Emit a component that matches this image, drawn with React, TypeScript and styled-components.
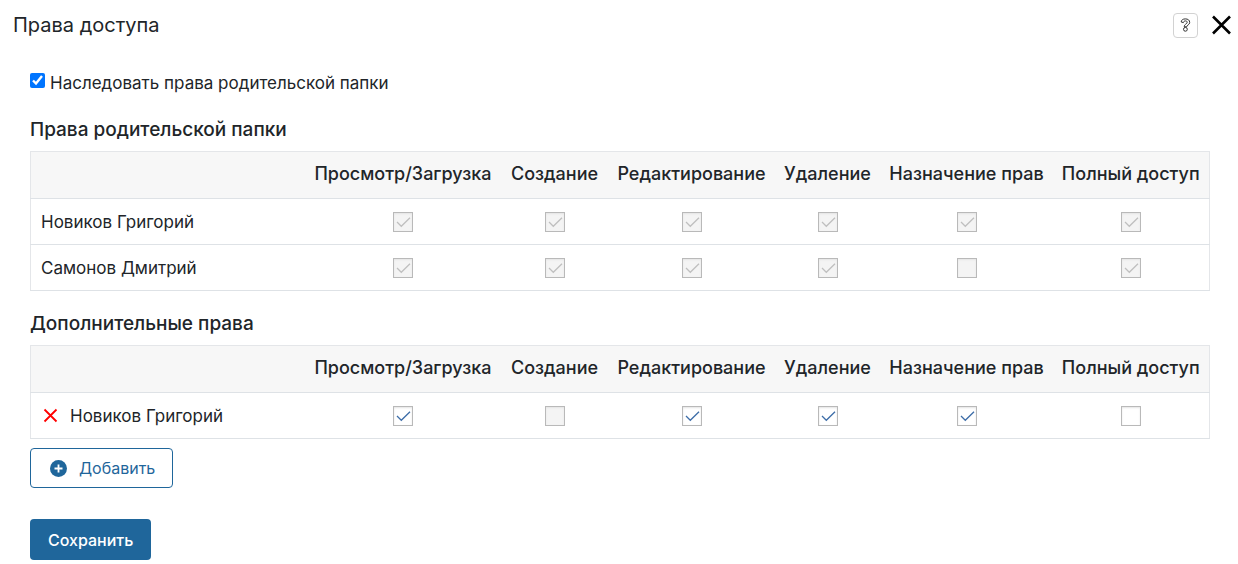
import React, { useState } from "react";
import styled, { createGlobalStyle } from "styled-components";

const GlobalStyle = createGlobalStyle`
  *, *::before, *::after { box-sizing: border-box; }
  body {
    margin: 0;
    background: #fff;
    color: #212529;
    font-family: Inter, "Liberation Sans", sans-serif;
    font-size: 17px;
    line-height: 26px;
  }
  button, input { font: inherit; margin: 0; }
`;

const Dialog = styled.main`
  width: 100%;
`;

const Header = styled.header`
  display: flex;
  align-items: center;
  justify-content: space-between;
  height: 50px;
  padding: 0 6px 0 13px;
`;

const Title = styled.h1`
  margin: 0;
  font-size: 20px;
  line-height: 28px;
  font-weight: 400;
`;

const HeaderActions = styled.div`
  display: flex;
  align-items: center;
  gap: 13px;
`;

const HelpButton = styled.button`
  display: flex;
  align-items: center;
  justify-content: center;
  width: 25px;
  height: 25px;
  padding: 0;
  border: 1px solid #d2d2d2;
  border-radius: 4px;
  background: #fff;
  cursor: pointer;
`;

const IconButton = styled.button`
  display: flex;
  padding: 0;
  border: 0;
  background: none;
  cursor: pointer;
`;

const Body = styled.div`
  padding: 19px 28px 4px 30px;
`;

const InheritLabel = styled.label`
  display: flex;
  align-items: flex-start;
  gap: 5px;
  line-height: 28px;
`;

const InheritInput = styled.input`
  width: 15px;
  height: 15px;
  && { margin: 4px 0 0; }
  accent-color: #0075ff;
`;

const Section = styled.section`
  margin-top: 20px;
`;

const Heading = styled.h2`
  margin: 0 0 8px;
  font-size: 19px;
  line-height: 26px;
  font-weight: 500;
`;

const Table = styled.table`
  width: 100%;
  table-layout: fixed;
  border-collapse: collapse;
  border: 1px solid #e4e6e9;
`;

const Col = styled.col<{ $width?: number }>`
  width: ${(p) => (p.$width ? `${p.$width}px` : "auto")};
`;

const Row = styled.tr<{ $head?: boolean }>`
  height: ${(p) => (p.$head ? 47 : 46)}px;
  border-bottom: 1px solid #dee2e6;
`;

const HeadCell = styled.th`
  padding: 0 0 2px;
  background: #f7f7f7;
  font-size: 18px;
  font-weight: 500;
  text-align: center;
  white-space: nowrap;
`;

const NameCell = styled.th`
  padding: 0 10px;
  font-weight: 400;
  text-align: left;
`;

const NameContent = styled.div`
  display: flex;
  align-items: center;
  gap: 10px;
`;

const CheckCell = styled.td`
  padding: 0;
`;

const CheckBox = styled.span`
  display: block;
  position: relative;
  width: 20px;
  height: 20px;
  margin: 0 auto;
`;

const CheckInput = styled.input`
  display: block;
  appearance: none;
  width: 20px;
  height: 20px;
  border: 1px solid #b9b9b9;
  background: #fff;
  box-shadow: inset 0 1px 2px #e4e4e4;
  &:disabled { background: #f4f4f4; }
`;

const CheckMark = styled.svg<{ $muted: boolean }>`
  position: absolute;
  inset: 0;
  pointer-events: none;
  fill: none;
  stroke: ${(p) => (p.$muted ? "#bfbfbf" : "#3d6da8")};
  stroke-width: 1.3;
`;

const Actions = styled.div`
  display: flex;
  flex-direction: column;
  align-items: flex-start;
  gap: 31px;
  margin-top: 9px;
`;

const AddButton = styled.button`
  display: flex;
  align-items: center;
  gap: 12px;
  height: 40px;
  padding: 0 17px 0 19px;
  border: 1px solid #1f669b;
  border-radius: 4px;
  background: #fff;
  color: #1f669b;
  font-size: 16px;
  cursor: pointer;
`;

const SaveButton = styled.button`
  height: 41px;
  padding: 0 18px;
  border: 0;
  border-radius: 4px;
  background: #1f669b;
  color: #fff;
  font-size: 16px;
  font-weight: 500;
  cursor: pointer;
`;

const columns = [
  { title: "Просмотр/Загрузка", width: 195 },
  { title: "Создание", width: 108 },
  { title: "Редактирование", width: 166 },
  { title: "Удаление", width: 106 },
  { title: "Назначение прав", width: 172 },
  { title: "Полный доступ", width: 157 },
];

type Right = { checked: boolean; disabled: boolean };
type Person = { name: string; removable?: boolean; rights: Right[] };

const on: Right = { checked: true, disabled: false };
const off: Right = { checked: false, disabled: false };
const lockedOn: Right = { checked: true, disabled: true };
const lockedOff: Right = { checked: false, disabled: true };

const parentRights: Person[] = [
  { name: "Новиков Григорий", rights: [lockedOn, lockedOn, lockedOn, lockedOn, lockedOn, lockedOn] },
  { name: "Самонов Дмитрий", rights: [lockedOn, lockedOn, lockedOn, lockedOn, lockedOff, lockedOn] },
];

const extraRights: Person[] = [
  { name: "Новиков Григорий", removable: true, rights: [on, lockedOff, on, on, on, off] },
];

function RightCheck({ right, label }: { right: Right; label: string }) {
  const [checked, setChecked] = useState(right.checked);
  return (
    <CheckBox>
      <CheckInput
        type="checkbox"
        aria-label={label}
        checked={checked}
        disabled={right.disabled}
        onChange={(e) => setChecked(e.target.checked)}
      />
      {checked && (
        <CheckMark $muted={right.disabled} width="20" height="20" viewBox="0 0 20 20" aria-hidden="true">
          <path d="M4 10 L8.3 14.3 L17 5.8" />
        </CheckMark>
      )}
    </CheckBox>
  );
}

function RightsTable({ people, labelledBy }: { people: Person[]; labelledBy: string }) {
  return (
    <Table aria-labelledby={labelledBy}>
      <colgroup>
        <Col />
        {columns.map((c) => (
          <Col key={c.title} $width={c.width} />
        ))}
      </colgroup>
      <thead>
        <Row $head>
          <HeadCell as="td" />
          {columns.map((c) => (
            <HeadCell key={c.title} scope="col">{c.title}</HeadCell>
          ))}
        </Row>
      </thead>
      <tbody>
        {people.map((p) => (
          <Row key={p.name}>
            <NameCell scope="row">
              <NameContent>
                {p.removable && (
                  <IconButton type="button" aria-label="Удалить">
                    <svg width="19" height="19" viewBox="0 0 19 19" fill="none" stroke="#f00" strokeWidth="1.8">
                      <path d="M3.5 3.5 L15.5 15.5 M15.5 3.5 L3.5 15.5" />
                    </svg>
                  </IconButton>
                )}
                {p.name}
              </NameContent>
            </NameCell>
            {p.rights.map((r, i) => (
              <CheckCell key={columns[i].title}>
                <RightCheck right={r} label={`${p.name}: ${columns[i].title}`} />
              </CheckCell>
            ))}
          </Row>
        ))}
      </tbody>
    </Table>
  );
}

export default function App() {
  return (
    <Dialog>
      <GlobalStyle />
      <Header>
        <Title>Права доступа</Title>
        <HeaderActions>
          <HelpButton type="button" aria-label="Справка">
            <svg width="11" height="15" viewBox="0 0 11 15" fill="none" stroke="#333" strokeWidth="1">
              <path d="M1.2 4 C1.2 2 3 0.9 5.3 0.9 C8 0.9 9.7 2.2 9.7 4.4 C9.7 7 6.7 7 6.7 8.8 L4.2 8.8 C4 6.2 7.2 6 7.2 4.3 C7.2 3.3 6.4 2.9 5.4 2.9 C4.2 2.9 3.7 3.6 3.4 4.6 Z" />
              <circle cx="5.4" cy="11.3" r="1.9" />
            </svg>
          </HelpButton>
          <IconButton type="button" aria-label="Закрыть">
            <svg width="21" height="20" viewBox="0 0 21 20" fill="none" stroke="#000" strokeWidth="2.6">
              <path d="M2 1.5 L19 18.5 M19 1.5 L2 18.5" />
            </svg>
          </IconButton>
        </HeaderActions>
      </Header>
      <Body>
        <InheritLabel>
          <InheritInput type="checkbox" defaultChecked />
          Наследовать права родительской папки
        </InheritLabel>
        <Section>
          <Heading id="parent-rights">Права родительской папки</Heading>
          <RightsTable people={parentRights} labelledBy="parent-rights" />
        </Section>
        <Section>
          <Heading id="extra-rights">Дополнительные права</Heading>
          <RightsTable people={extraRights} labelledBy="extra-rights" />
        </Section>
        <Actions>
          <AddButton type="button">
            <svg width="17" height="17" viewBox="0 0 17 17" aria-hidden="true">
              <circle cx="8.5" cy="8.5" r="8.5" fill="#1f669b" />
              <path d="M8.5 4.5 V12.5 M4.5 8.5 H12.5" stroke="#fff" strokeWidth="1.8" />
            </svg>
            Добавить
          </AddButton>
          <SaveButton type="button">Сохранить</SaveButton>
        </Actions>
      </Body>
    </Dialog>
  );
}
